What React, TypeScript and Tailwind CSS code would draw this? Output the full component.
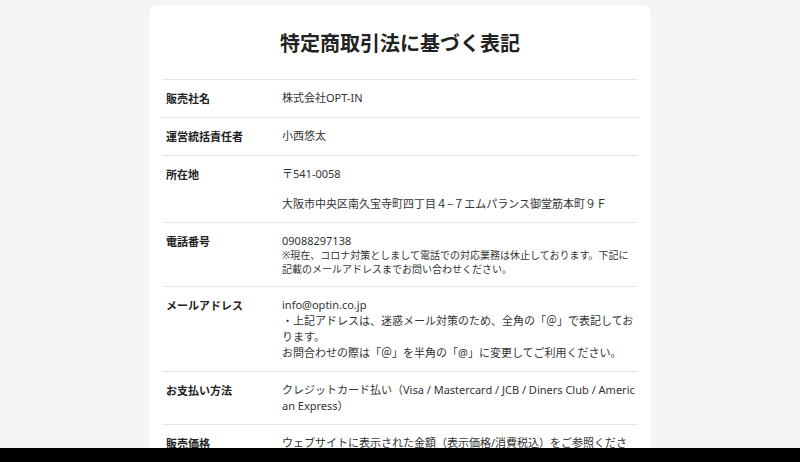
const rows: { label: string; body: React.ReactNode }[] = [
  { label: "販売社名", body: <p>株式会社OPT-IN</p> },
  { label: "運営統括責任者", body: <p>小西悠太</p> },
  {
    label: "所在地",
    body: (
      <>
        <p>〒541-0058</p>
        <p className="mt-[14px]">大阪市中央区南久宝寺町四丁目４−７エムパランス御堂筋本町９Ｆ</p>
      </>
    ),
  },
  {
    label: "電話番号",
    body: (
      <>
        <p>09088297138</p>
        <p className="text-[10px] leading-[14px] mt-[-1px]">
          ※現在、コロナ対策としまして電話での対応業務は休止しております。下記に記載のメールアドレスまでお問い合わせください。
        </p>
      </>
    ),
  },
  {
    label: "メールアドレス",
    body: (
      <>
        <p>info@optin.co.jp</p>
        <p>・上記アドレスは、迷惑メール対策のため、全角の「＠」で表記しております。</p>
        <p>お問合わせの際は「＠」を半角の「@」に変更してご利用ください。</p>
      </>
    ),
  },
  { label: "お支払い方法", body: <p>クレジットカード払い（Visa / Mastercard / JCB / Diners Club / American Express）</p> },
  { label: "販売価格", body: <p>ウェブサイトに表示された金額（表示価格/消費税込）をご参照ください。</p> },
];

export default function App() {
  return (
    <div
      className="relative h-[462px] overflow-hidden bg-[#f4f5f7] text-[#222]"
      style={{ fontFamily: '"Noto Sans", "Noto Sans CJK JP", sans-serif' }}
    >
      <div className="mx-auto mt-[6px] w-[500px] rounded bg-white px-3 pb-10">
        <h1 className="pt-[25px] pb-[22px] text-center text-[20px] font-bold leading-[26px] text-[#222]">
          特定商取引法に基づく表記
        </h1>
        <div className="border-t border-[#e6e6e6]">
          {rows.map((r) => (
            <div key={r.label} className="flex border-b border-[#e6e6e6] py-[10px]">
              <div className="w-[120px] shrink-0 pl-1 pt-[1px] text-[11px] font-bold leading-4">{r.label}</div>
              <div className="flex-1 break-all text-[11px] leading-4 text-[#333]">{r.body}</div>
            </div>
          ))}
        </div>
      </div>
      <div className="absolute bottom-0 left-0 right-0 h-[14px] bg-black" />
    </div>
  );
}
